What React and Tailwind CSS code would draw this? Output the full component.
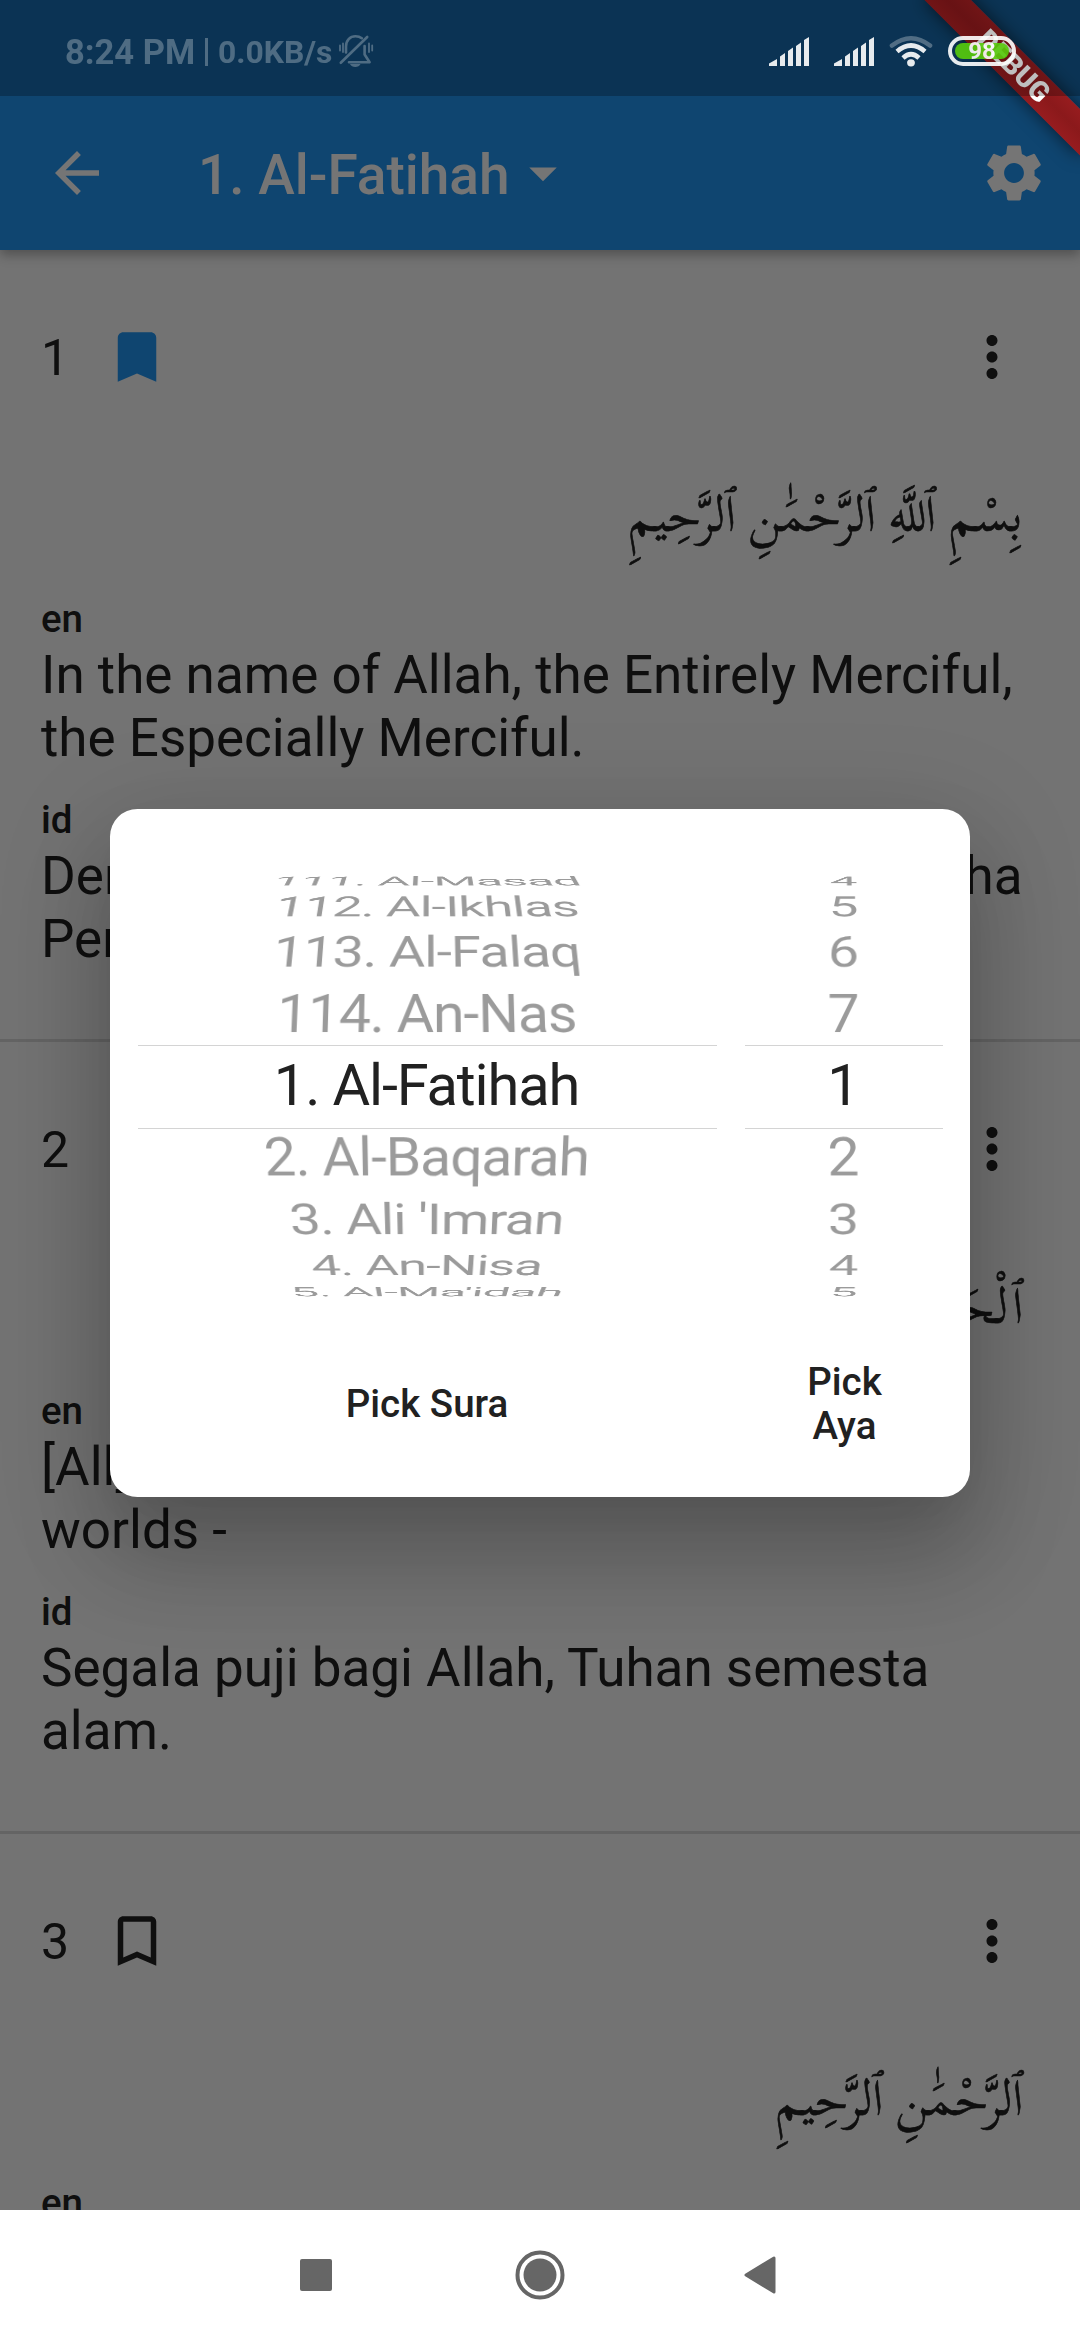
import React from "react";

const VERSES = [
  {
    number: 1,
    marked: true,
    arabic: "بِسْمِ ٱللَّهِ ٱلرَّحْمَٰنِ ٱلرَّحِيمِ",
    en: "In the name of Allah, the Entirely Merciful, the Especially Merciful.",
    id: "Dengan menyebut nama Allah Yang Maha Pemurah lagi Maha Penyayang.",
  },
  {
    number: 2,
    marked: false,
    arabic: "ٱلْحَمْدُ لِلَّهِ رَبِّ ٱلْعَٰلَمِينَ",
    en: "[All] praise is [due] to Allah, Lord of the worlds -",
    id: "Segala puji bagi Allah, Tuhan semesta alam.",
  },
  {
    number: 3,
    marked: false,
    arabic: "ٱلرَّحْمَٰنِ ٱلرَّحِيمِ",
    en: "",
    id: "",
  },
];

const SURAS = [
  "111. Al-Masad",
  "112. Al-Ikhlas",
  "113. Al-Falaq",
  "114. An-Nas",
  "1. Al-Fatihah",
  "2. Al-Baqarah",
  "3. Ali 'Imran",
  "4. An-Nisa",
  "5. Al-Ma'idah",
];
const AYAS = ["4", "5", "6", "7", "1", "2", "3", "4", "5"];

// Geometry of the picker cylinder, in pixels and degrees.
const RADIUS = 267.5;
const STEP = 15.74;
const DEPTH = 916;

function MaterialIcon({ d, className }) {
  return (
    <svg viewBox="0 0 24 24" fill="currentColor" className={className}>
      <path d={d} />
    </svg>
  );
}

const ICONS = {
  back: "M20 11H7.83l5.59-5.59L12 4l-8 8 8 8 1.41-1.41L7.83 13H20v-2z",
  drop: "M7 10l5 5 5-5z",
  gear: "M19.43 12.98c.04-.32.07-.64.07-.98s-.03-.66-.07-.98l2.11-1.65c.19-.15.24-.42.12-.64l-2-3.46c-.12-.22-.39-.3-.61-.22l-2.49 1c-.52-.4-1.08-.73-1.69-.98l-.38-2.65C14.46 2.18 14.25 2 14 2h-4c-.25 0-.46.18-.49.42l-.38 2.65c-.61.25-1.17.59-1.69.98l-2.49-1c-.23-.09-.49 0-.61.22l-2 3.46c-.13.22-.07.49.12.64l2.11 1.65c-.04.32-.07.65-.07.98s.03.66.07.98l-2.11 1.65c-.19.15-.24.42-.12.64l2 3.46c.12.22.39.3.61.22l2.49-1c.52.4 1.08.73 1.69.98l.38 2.65c.03.24.24.42.49.42h4c.25 0 .46-.18.49-.42l.38-2.65c.61-.25 1.17-.59 1.69-.98l2.49 1c.23.09.49 0 .61-.22l2-3.46c.12-.22.07-.49-.12-.64l-2.11-1.65zM12 15.6c-1.98 0-3.6-1.62-3.6-3.6s1.62-3.6 3.6-3.6 3.6 1.62 3.6 3.6-1.62 3.6-3.6 3.6z",
  bookmark: "M17 3H7c-1.1 0-1.99.9-1.99 2L5 21l7-3 7 3V5c0-1.1-.9-2-2-2z",
  bookmarkOutline: "M17 3H7c-1.1 0-1.99.9-1.99 2L5 21l7-3 7 3V5c0-1.1-.9-2-2-2zm0 15l-5-2.18L7 18V5h10v13z",
  more: "M12 8c1.1 0 2-.9 2-2s-.9-2-2-2-2 .9-2 2 .9 2 2 2zm0 2c-1.1 0-2 .9-2 2s.9 2 2 2 2-.9 2-2-.9-2-2-2zm0 6c-1.1 0-2 .9-2 2s.9 2 2 2 2-.9 2-2-.9-2-2-2z",
};

function SignalIcon() {
  return (
    <svg viewBox="0 0 40 29" className="h-[29px] w-10" fill="#fff">
      <path d="M0 29V26.5L8 22V29zM11 29V19.5L16 16V29zM19 29V14L24 10.5V29zM27 29V9L32 5.5V29zM35 29V3L40 0V29z" />
    </svg>
  );
}

function WifiIcon() {
  return (
    <svg viewBox="0 0 44 34" className="h-[34px] w-11" fill="none" stroke="#fff" strokeWidth="4.6">
      <path d="M3 11.5Q22 -3 41 11.5" strokeLinecap="round" opacity=".32" />
      <path d="M8 17.5Q22 5.5 36 17.5" />
      <path d="M14 24Q22 16.5 30 24" />
      <ellipse cx="22" cy="28.8" rx="3.9" ry="3.6" fill="#fff" stroke="none" />
    </svg>
  );
}

function MutedBellIcon() {
  return (
    <svg viewBox="0 0 36 34" className="h-[34px] w-9" fill="none" stroke="#fff" strokeWidth="2.6" strokeLinecap="round">
      <path d="M2.8 28.8L29.2 3" />
      <path d="M8 18.5V12.5C8 6.5 12 2.2 17.5 2.2C20 2.2 22 2.8 23.8 4.2" />
      <path d="M26.6 12V20.5L31.6 28.2H11" strokeLinejoin="round" />
      <path d="M12 30h10.5c-1.5 4-9 4-10.5 0z" fill="#fff" stroke="none" />
      <path d="M2 11.5v5M5 9.5v8.5M31 9.5v8.5M34.2 11.5v5" strokeWidth="1.8" />
    </svg>
  );
}

function StatusBar() {
  return (
    <div className="absolute inset-x-0 top-0 flex h-24 items-center bg-black/25 pl-[65px] pr-16">
      <div className="flex items-center text-white opacity-[.28]">
        <span className="w-[140px] whitespace-nowrap pt-[7px] text-[34.5px] font-bold leading-[40px]">8:24 PM</span>
        <span className="mt-2 h-7 w-[3px] bg-white" />
        <span className="ml-[10px] whitespace-nowrap pt-[7px] text-[31.8px] font-bold leading-[40px]">0.0KB/s</span>
        <span className="ml-1.5 mt-1.5">
          <MutedBellIcon />
        </span>
      </div>
      <div className="ml-auto flex items-center pt-1.5 opacity-90">
        <SignalIcon />
        <span className="ml-[25px]">
          <SignalIcon />
        </span>
        <span className="ml-[15px]">
          <WifiIcon />
        </span>
        <div className="ml-[15px] flex h-[30px] w-[68px] rounded-full border-4 border-white p-[3px]">
          <div className="flex flex-1 items-center justify-center rounded-full bg-[#58cc0c] text-[24px] font-bold leading-none text-white">
            98
          </div>
        </div>
      </div>
    </div>
  );
}

function AppBar() {
  return (
    <div className="relative z-10 flex h-[250px] shrink-0 items-center bg-[#2196f3] pl-11 pr-[33px] pt-24 text-white shadow-[0_5px_11px_rgba(0,0,0,0.3)]">
      <MaterialIcon d={ICONS.back} className="size-[66px]" />
      <span className="ml-[88px] whitespace-nowrap pt-1 text-[55px] font-medium leading-none">1. Al-Fatihah</span>
      <MaterialIcon d={ICONS.drop} className="size-[66px]" />
      <MaterialIcon d={ICONS.gear} className="ml-auto size-[66px]" />
    </div>
  );
}

function Translation({ lang, text }) {
  return (
    <div className="mb-[26px] px-[41px]">
      <div className="text-[38.5px] font-medium leading-[48px]">{lang}</div>
      <div className="h-[127px] pt-px text-[53px] leading-[63px]">{text}</div>
    </div>
  );
}

function Verse({ verse }) {
  return (
    <div className="flex h-[792px] shrink-0 flex-col border-b-[3px] border-black/12 text-[#212121]">
      <div className="flex h-[214px] shrink-0 items-center pl-[41px] pr-[55px]">
        <span className="w-[63px] pt-0.5 text-[50px]">{verse.number}</span>
        <MaterialIcon
          d={verse.marked ? ICONS.bookmark : ICONS.bookmarkOutline}
          className={verse.marked ? "size-[66px] text-[#2196f3]" : "size-[66px]"}
        />
        <MaterialIcon d={ICONS.more} className="ml-auto size-[66px]" />
      </div>
      <div
        dir="rtl"
        className="h-[131px] shrink-0 whitespace-nowrap px-[57px] font-['Scheherazade_New','Noto_Naskh_Arabic','DejaVu_Sans',serif] text-[49px] leading-[102px] [-webkit-text-stroke:0.6px_#212121]"
      >
        {verse.arabic}
      </div>
      <Translation lang="en" text={verse.en} />
      {verse.id && <Translation lang="id" text={verse.id} />}
    </div>
  );
}

function Wheel({ items }) {
  const middle = Math.floor(items.length / 2);
  return (
    <div className="grid h-[500px] items-center overflow-hidden">
      {items.map((item, i) => (
        <div
          key={i}
          className={
            i === middle
              ? "col-start-1 row-start-1 h-[82px] whitespace-nowrap pr-[2px] text-center text-[57.75px] leading-[79px] tracking-[-1.13px] text-[#212121]"
              : "col-start-1 row-start-1 h-[82px] whitespace-nowrap pr-[2px] text-center text-[57.75px] leading-[79px] tracking-[-1.13px] text-[#212121]/45"
          }
          style={{
            transform: `perspective(${DEPTH}px) translateZ(${-RADIUS}px) rotateX(${(middle - i) * STEP}deg) translateZ(${RADIUS}px)`,
          }}
        >
          {item}
        </div>
      ))}
      <div className="col-start-1 row-start-1 h-[84px] border-y border-[#d4d4d4]" />
    </div>
  );
}

function PickerDialog() {
  return (
    <div className="grid h-[688px] w-[860px] grid-cols-[579px_198px] content-start justify-between rounded-[27.5px] bg-white px-[27.5px] pt-[27.5px] text-[#212121] shadow-[0_24px_41px_-19px_rgba(0,0,0,0.06),0_60px_90px_8px_rgba(0,0,0,0.16),0_25px_110px_14px_rgba(0,0,0,0.12)]">
      <Wheel items={SURAS} />
      <Wheel items={AYAS} />
      <div className="flex h-[132px] items-center justify-center pt-[2px] text-[38.5px] font-medium leading-[44px]">Pick Sura</div>
      <div className="flex h-[132px] items-center justify-center pl-[2px] pt-[2px] text-center text-[38.5px] font-medium leading-[44px]">
        Pick
        <br />
        Aya
      </div>
    </div>
  );
}

function DebugBanner() {
  return (
    <div className="absolute right-[-110px] top-[77px] flex h-[33px] w-[220px] origin-[50%_-77px] rotate-45 items-center justify-center bg-linear-to-b from-[#971c1f] via-[#8b191b] to-[#971c1f] text-[28px] font-black leading-none text-white shadow-[0_0_18px_rgba(0,0,0,0.6)]">
      DEBUG
    </div>
  );
}

function NavigationBar() {
  return (
    <div className="relative flex h-[130px] shrink-0 items-center justify-center bg-white pr-1">
      <div className="size-8 rounded-[2px] bg-[#666]" />
      <svg viewBox="0 0 50 50" className="ml-[183px] size-[50px]">
        <circle cx="25" cy="25" r="22.5" fill="none" stroke="#666" strokeWidth="4" />
        <circle cx="25" cy="25" r="16.5" fill="#666" />
      </svg>
      <svg viewBox="0 0 32 38" className="ml-[179px] h-[38px] w-8" fill="#666" stroke="#666" strokeWidth="3" strokeLinejoin="round">
        <path d="M2 19L30 2V36z" />
      </svg>
    </div>
  );
}

export default function App() {
  return (
    <div className="relative flex h-[2340px] w-[1080px] flex-col overflow-hidden bg-[#fafafa] font-[Roboto,sans-serif]">
      <div className="relative flex h-[2210px] shrink-0 flex-col overflow-hidden">
        <AppBar />
        {VERSES.map((verse) => (
          <Verse key={verse.number} verse={verse} />
        ))}
        <div className="absolute inset-0 z-20 flex items-center justify-center bg-black/54 pt-24">
          <PickerDialog />
        </div>
      </div>
      <NavigationBar />
      <div className="pointer-events-none absolute inset-0 z-30 overflow-hidden">
        <DebugBanner />
        <StatusBar />
      </div>
    </div>
  );
}
